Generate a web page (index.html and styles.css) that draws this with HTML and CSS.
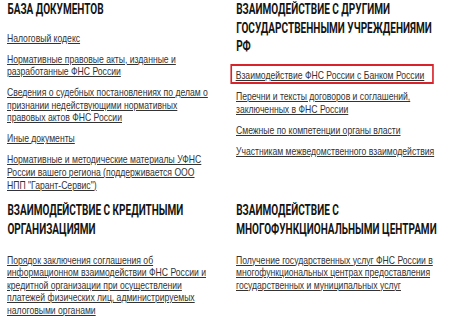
FILE: index.html
```html
<!DOCTYPE html>
<html>
<head>
<meta charset="utf-8">
<title>Документы ФНС</title>
<link rel="stylesheet" href="styles.css">
</head>
<body>
<main class="grid">
  <section class="block">
    <h2 class="title">БАЗА ДОКУМЕНТОВ</h2>
    <p class="item"><a href="#">Налоговый кодекс</a></p>
    <p class="item"><a href="#">Нормативные правовые акты, изданные и разработанные ФНС России</a></p>
    <p class="item"><a href="#">Сведения о судебных постановлениях по делам о признании недействующими нормативных правовых актов ФНС России</a></p>
    <p class="item"><a href="#">Иные документы</a></p>
    <p class="item"><a href="#">Нормативные и методические материалы УФНС России вашего региона (поддерживается ООО НПП "Гарант-Сервис")</a></p>
  </section>
  <section class="block">
    <h2 class="title">ВЗАИМОДЕЙСТВИЕ С ДРУГИМИ ГОСУДАРСТВЕННЫМИ УЧРЕЖДЕНИЯМИ РФ</h2>
    <p class="item item-marked"><a href="#">Взаимодействие ФНС России с Банком России</a></p>
    <p class="item"><a href="#">Перечни и тексты договоров и соглашений,<br>заключенных в ФНС России</a></p>
    <p class="item"><a href="#">Смежные по компетенции органы власти</a></p>
    <p class="item"><a href="#">Участникам межведомственного взаимодействия</a></p>
  </section>
  <section class="block block-lower">
    <h2 class="title">ВЗАИМОДЕЙСТВИЕ С КРЕДИТНЫМИ ОРГАНИЗАЦИЯМИ</h2>
    <p class="item"><a href="#">Порядок заключения соглашения об информационном взаимодействии ФНС России и кредитной организации при осуществлении платежей физических лиц, администрируемых налоговыми органами</a></p>
  </section>
  <section class="block block-lower">
    <h2 class="title">ВЗАИМОДЕЙСТВИЕ С МНОГОФУНКЦИОНАЛЬНЫМИ ЦЕНТРАМИ</h2>
    <p class="item"><a href="#">Получение государственных услуг ФНС России в многофункциональных центрах предоставления государственных и муниципальных услуг</a></p>
  </section>
</main>
</body>
</html>
```
FILE: styles.css
```css
html, body {
  margin: 0;
  padding: 0;
  background: #ffffff;
  overflow: hidden;
}

body {
  font-family: "Liberation Sans", Arial, sans-serif;
  font-size: 10.5px;
  color: #333333;
}

/* The site uses a condensed typeface; the grid is laid out
   wider and drawn condensed to 82% of its width. */
.grid {
  display: grid;
  grid-template-columns: 250px 250px;
  column-gap: 29.27px;
  padding: 0 0 0 8.54px;
  width: max-content;
  transform: scaleX(0.82);
  transform-origin: 0 0;
}

.block {
  display: flex;
  flex-direction: column;
  align-items: flex-start;
}

/* headings are narrower still (condensed display face) */
.title {
  width: 314px;
  margin: 0 0 13px;
  font-family: "Roboto", "Liberation Sans", sans-serif;
  font-weight: 700;
  font-size: 15px;
  line-height: 18.7px;
  color: #141414;
  transform: scaleX(0.815);
  transform-origin: 0 0;
}

.block-lower {
  padding-top: 4px;
}

.block-lower .title {
  margin-bottom: 15px;
}

.item {
  margin: 0 0 8.4px;
  line-height: 12.6px;
}

.item:last-child {
  margin-bottom: 6px;
}

.item a {
  color: #333333;
  text-decoration: underline;
}

.item-marked {
  border-style: solid;
  border-color: #d8232a;
  border-width: 2px 2.44px;
  padding: 3px 9.75px 0.5px 4.9px;
  margin: -5px 0 5.9px -7.3px;
}
```
